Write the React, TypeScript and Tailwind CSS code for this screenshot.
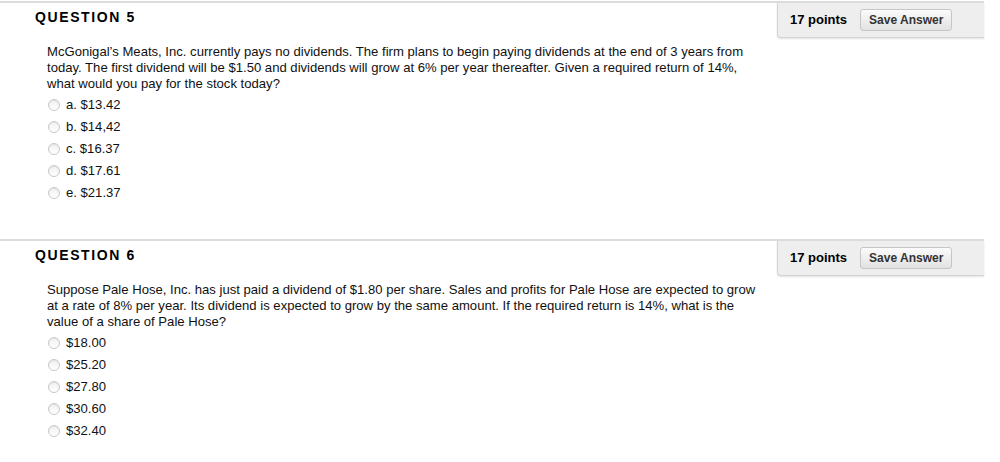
import React from 'react'

type Question = {
  number: number
  lines: string[]
  options: string[]
}

const questions: Question[] = [
  {
    number: 5,
    lines: [
      'McGonigal’s Meats, Inc. currently pays no dividends. The firm plans to begin paying dividends at the end of 3 years from',
      'today. The first dividend will be $1.50 and dividends will grow at 6% per year thereafter. Given a required return of 14%,',
      'what would you pay for the stock today?',
    ],
    options: ['a. $13.42', 'b. $14,42', 'c. $16.37', 'd. $17.61', 'e. $21.37'],
  },
  {
    number: 6,
    lines: [
      'Suppose Pale Hose, Inc. has just paid a dividend of $1.80 per share. Sales and profits for Pale Hose are expected to grow',
      'at a rate of 8% per year. Its dividend is expected to grow by the same amount. If the required return is 14%, what is the',
      'value of a share of Pale Hose?',
    ],
    options: ['$18.00', '$25.20', '$27.80', '$30.60', '$32.40'],
  },
]

function Radio() {
  return (
    <span className="inline-block h-[12px] w-[12px] shrink-0 rounded-full border border-[#c8c8c8] bg-gradient-to-b from-[#f0f0f0] to-white shadow-[inset_0_1px_1px_rgba(0,0,0,0.06)]" />
  )
}

function QuestionBlock({ q }: { q: Question }) {
  return (
    <section className="border-t-2 border-[#dcdcdc] pb-[35px]">
      {/* Header */}
      <div className="flex items-start justify-between">
        <h3 className="pl-[35px] pt-[4px] text-[14px] font-bold leading-[20px] tracking-[1.6px] text-black">
          QUESTION {q.number}
        </h3>
        <div className="flex h-[35px] w-[207px] items-center rounded-bl-[4px] border-b border-l border-[#d4d4d4] bg-[#eeeeee] pl-[12px] shadow-[0_1px_2px_rgba(0,0,0,0.12)]">
          <span className="text-[13px] font-bold text-black">17 points</span>
          <button className="ml-[13px] h-[22px] rounded-[3px] border border-[#c6c6c6] bg-gradient-to-b from-[#fbfbfb] to-[#e2e2e2] px-[8px] text-[12px] font-bold text-[#333]">
            Save Answer
          </button>
        </div>
      </div>

      {/* Body */}
      <div className="mt-[6px] pl-[47px] text-[13.1px] leading-[16px] text-[#111]">
        {q.lines.map((line, i) => (
          <p key={i} className="whitespace-nowrap">
            {line}
          </p>
        ))}
        <ul className="mt-[2px]">
          {q.options.map((opt) => (
            <li key={opt} className="flex h-[22px] items-center gap-[6px] pl-[1px]">
              <Radio />
              <span>{opt}</span>
            </li>
          ))}
        </ul>
      </div>
    </section>
  )
}

export default function App() {
  return (
    <div className="h-[462px] w-[1000px] bg-white pt-[1px] font-['Liberation_Sans',Arial,sans-serif]">
      <div className="w-[984px]">
        {questions.map((q) => (
          <QuestionBlock key={q.number} q={q} />
        ))}
      </div>
    </div>
  )
}
